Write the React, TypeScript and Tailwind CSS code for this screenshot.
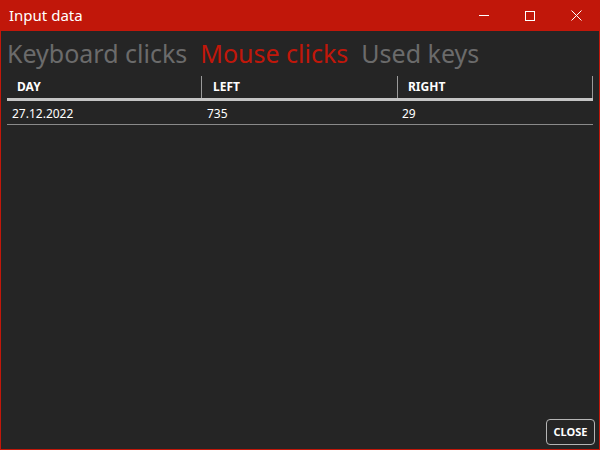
export default function App() {
  const rows = [{ day: "27.12.2022", left: "735", right: "29" }];

  return (
    <div
      className="w-[600px] h-[450px] flex flex-col bg-[#c1170a] px-px pb-px"
      style={{ fontFamily: '"Noto Sans", "Open Sans", sans-serif' }}
    >
      <div className="h-[31px] flex items-center text-white shrink-0">
        <span className="pl-2 text-[15px] leading-none">Input data</span>
        <div className="ml-auto flex h-full">
          <div className="w-[46px] h-full flex items-center justify-center">
            <div className="w-[10px] h-px bg-white" />
          </div>
          <div className="w-[46px] h-full flex items-center justify-center">
            <div className="w-[10px] h-[10px] border border-white" />
          </div>
          <div className="w-[46px] h-full flex items-center justify-center">
            <svg width="11" height="11" viewBox="0 0 11 11" stroke="white" strokeWidth="1">
              <path d="M0.5 0.5 L10.5 10.5 M10.5 0.5 L0.5 10.5" />
            </svg>
          </div>
        </div>
      </div>

      <div className="flex-1 flex flex-col bg-[#252525] px-[6px]">
        <div className="flex gap-[13px] pt-[5px] h-[40px] text-[25px] leading-none items-center">
          <span className="text-[#6b6b6b]">Keyboard clicks</span>
          <span className="text-[#c1170a]">Mouse clicks</span>
          <span className="text-[#6b6b6b]">Used keys</span>
        </div>

        <div className="grid grid-cols-[194px_196px_196px] mt-[5px] w-[586px]">
          <div className="h-[22px] flex items-center pl-[10px] text-[12px] font-bold text-white">DAY</div>
          <div className="h-[22px] flex items-center pl-[11px] text-[12px] font-bold text-white border-l border-[#9a9a9a]">LEFT</div>
          <div className="h-[22px] flex items-center pl-[10px] text-[12px] font-bold text-white border-l border-r border-[#9a9a9a]">RIGHT</div>
          <div className="col-span-3 h-[3px] bg-[#c4c4c4]" />
          {rows.map((r, i) => (
            <div key={i} className="contents">
              <div className="h-[24px] flex items-center pl-[5px] pt-[2px] text-[12px] text-white border-b border-[#8a8a8a]">{r.day}</div>
              <div className="h-[24px] flex items-center pl-[6px] pt-[2px] text-[12px] text-white border-b border-[#8a8a8a]">{r.left}</div>
              <div className="h-[24px] flex items-center pl-[5px] pt-[2px] text-[12px] text-white border-b border-[#8a8a8a]">{r.right}</div>
            </div>
          ))}
        </div>

        <div className="flex-1" />
        <div className="flex justify-end pb-[4px] mr-[-2px]">
          <button className="h-[26px] w-[49px] rounded-[4px] border border-[#b5b5b5] text-white text-[11px] font-bold flex items-center justify-center">
            CLOSE
          </button>
        </div>
      </div>
    </div>
  );
}
